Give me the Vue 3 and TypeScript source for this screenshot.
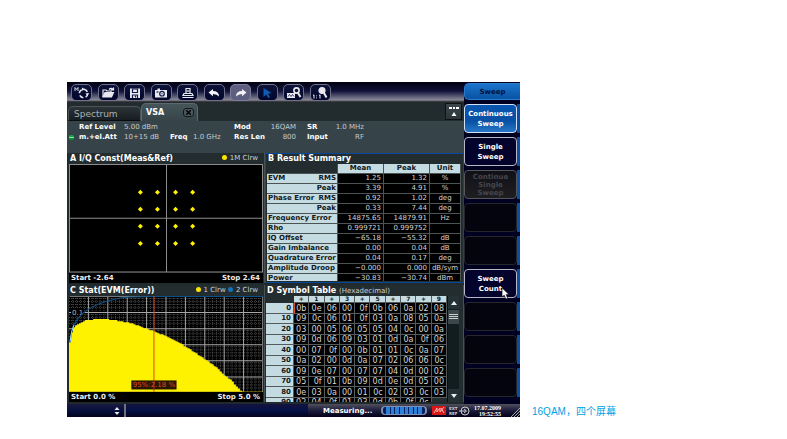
<script setup lang="ts">
type Tool = { name: string; active?: boolean }
const tools: Tool[] = [
  { name: 'Preset mode' }, { name: 'Open' }, { name: 'Save' }, { name: 'Screenshot' }, { name: 'Print' },
  { name: 'Undo' }, { name: 'Redo', active: true }, { name: 'Select' }, { name: 'Zoom window' }, { name: 'Zoom 1:1' },
]

type Key = { lines: string[]; state?: string }
const keys: Key[] = [
  { lines: ['Continuous', 'Sweep'], state: 'on' },
  { lines: ['Single', 'Sweep'] },
  { lines: ['Continue', 'Single', 'Sweep'], state: 'off' },
  { lines: [], state: 'empty' },
  { lines: [], state: 'empty' },
  { lines: ['Sweep', 'Count'] },
  { lines: [], state: 'empty' },
  { lines: [], state: 'empty' },
  { lines: [], state: 'empty' },
]

const results: [string, string, string, string, string][] = [
  ['EVM', 'RMS', '1.25', '1.32', '%'],
  ['', 'Peak', '3.39', '4.91', '%'],
  ['Phase Error', 'RMS', '0.92', '1.02', 'deg'],
  ['', 'Peak', '0.33', '7.44', 'deg'],
  ['Frequency Error', '', '14875.65', '14879.91', 'Hz'],
  ['Rho', '', '0.999721', '0.999752', ''],
  ['IQ Offset', '', '−65.18', '−55.32', 'dB'],
  ['Gain Imbalance', '', '0.00', '0.04', 'dB'],
  ['Quadrature Error', '', '0.04', '0.17', 'deg'],
  ['Amplitude Droop', '', '−0.000', '0.000', 'dB/sym'],
  ['Power', '', '−30.83', '−30.74', 'dBm'],
]

const symbolHead = ['+', '1', '+', '3', '+', '5', '+', '7', '+', '9']
const symbols = [
  '0b 0e 06 00 0f 0b 06 0a 02 08',
  '09 0c 06 01 0f 03 0a 08 05 0a',
  '03 00 05 06 05 05 04 0c 00 0a',
  '09 0d 06 09 03 01 0d 0a 0f 06',
  '00 07 0f 00 0b 01 01 0c 0a 07',
  '0a 02 00 0d 0a 07 02 06 06 0c',
  '09 0e 07 00 07 07 04 0d 00 02',
  '05 0f 01 0b 09 0d 0e 0d 05 00',
  '0e 03 0a 00 01 0c 02 03 0c 03',
  '02 04 0f 01 03 0d 0b 0f 0c',
].map((row) => row.split(' '))

const pointsX = [71, 88, 106, 123]
const pointsY = [28, 45, 62, 79]

// Histogram outline, sampled in plot units and filled as vertical bars.
const outline: [number, number][] = [
  [0, 46], [2, 36], [4, 31], [9, 27], [17, 24], [27, 23], [35, 23], [44, 24], [61, 27], [84, 35],
  [107, 45], [121, 54], [136, 64], [146, 71], [154, 79], [161, 84], [167, 91], [173, 96],
]
function outlineAt(x: number): number {
  for (let i = 1; i < outline.length; i++) {
    const [x1, y1] = outline[i]
    const [x0, y0] = outline[i - 1]
    if (x <= x1) return y0 + ((y1 - y0) * (x - x0)) / (x1 - x0)
  }
  return 96
}
let histogram = 'M0 96'
for (let x = 0; x < 173; x += 2) histogram += `V${Math.round(outlineAt(x))}H${Math.min(x + 2, 173)}`
histogram += 'V96Z'

const majorX = Array.from({ length: 9 }, (_, i) => (i + 1) * 19.3)
const minorX = Array.from({ length: 50 }, (_, i) => i * 3.86).filter((_, i) => i % 5 !== 0)
const majorY = [16, 32, 48, 64, 80]
const minorY = [0, 16, 32, 48, 64, 80].flatMap((y) => [2, 5, 8, 11].map((d) => y + d))
</script>

<template>
  <main class="page">
    <section class="analyzer">
      <div class="main">
        <nav class="toolbar" aria-label="Toolbar">
          <button v-for="(t, i) in tools" :key="t.name" class="tool" :class="{ active: t.active }" :aria-label="t.name">
            <svg viewBox="0 0 16 14" width="16" height="14" fill="none" stroke="#e8e8ee" stroke-width="1.2">
              <template v-if="i === 0">
                <path d="M1 5V1.500l1.500 2 1.500-2V5" stroke-width="0.900" />
                <circle cx="9.500" cy="7.500" r="4.200" stroke-dasharray="4.200 2.400" stroke-width="1.500" />
                <path d="M8 1.500l3 1.800-3 1.500zM15 7l-1.500 3-2-2.500z" fill="#e8e8ee" stroke="none" />
              </template>
              <template v-else-if="i === 1">
                <path d="M3 11V4h3l1 1h4v2" />
                <path d="M3 11l2-4.500h8.500L11.500 11z" fill="#e8e8ee" />
                <path d="M9 3.500q2-2 4 0M13.500 1.500v2.500H11" />
              </template>
              <template v-else-if="i === 2">
                <path d="M3 2.500h10v9.500H3z" fill="#e8e8ee" stroke="none" />
                <path d="M5.500 3h5v3.500h-5zM5.500 12V9h5v3" stroke="#11194a" />
                <path d="M8.500 9.500v2" stroke="#11194a" />
              </template>
              <template v-else-if="i === 3">
                <path d="M2 4h2.500V2.500H7V4h7v7.500H2z" fill="#e8e8ee" stroke="none" />
                <circle cx="9" cy="7.700" r="2.300" stroke="#11194a" />
                <path d="M3.500 6h2" stroke="#11194a" />
                <circle cx="9" cy="7.700" r="0.600" fill="#11194a" stroke="none" />
              </template>
              <template v-else-if="i === 4">
                <path d="M6 7V2.500h4V7M4 7.500h8l1 2H3zM2.500 11.500h11" />
                <path d="M6.500 5h3" />
              </template>
              <path v-else-if="i === 5" d="M2.500 6.500L7 3v2q6 0 6 5.500Q11 8 7 8v2.200z" fill="#f2f2f4" stroke="none" />
              <path v-else-if="i === 6" d="M13.500 6.500L9 3v2Q3 5 3 10.500 5 8 9 8v2.200z" fill="#f2f2f4" stroke="none" />
              <path v-else-if="i === 7" d="M4.500 2l8 5-3.500.7 2 3.300-1.800 1-1.900-3.400L4.500 11z" fill="#0e5cb4" stroke="none" />
              <template v-else-if="i === 8">
                <path d="M1 7h8v5H1z" fill="#e8e8ee" stroke="none" />
                <path d="M2 10.500l1.500-2 1.500 2 1.500-2 1.500 2" stroke="#11194a" stroke-width="0.800" />
                <circle cx="10.500" cy="4.500" r="2.600" stroke-width="1.600" />
                <path d="M12 7l2.500 4" stroke-width="2" />
              </template>
              <template v-else>
                <circle cx="10" cy="4.500" r="3" fill="#e8e8ee" />
                <path d="M12 7l2.500 4.500" stroke-width="2" />
                <path d="M1 9.500l1-.7V12.500M7 9.500l1-.7V12.500M4.500 9.500v.8M4.500 11.500v.8" stroke-width="1" />
              </template>
            </svg>
          </button>
        </nav>

        <div class="tabs">
          <button class="tab">Spectrum</button>
          <div class="tab current">
            <button class="tabname">VSA</button>
            <button class="close" aria-label="Close VSA">
              <svg viewBox="0 0 5 5" width="5" height="5"><path d="M0 0l5 5M5 0L0 5" stroke="#020405" stroke-width="1.500" /></svg>
            </button>
          </div>
          <button class="drop" aria-label="Show windows">
            <svg viewBox="0 0 14 14" width="14" height="14" fill="#fff">
              <path d="M2 2h3v2H2zM6 2h2v2H6zM9 2h3v2H9zM7 7l2.500 4h-5z" />
            </svg>
          </button>
        </div>

        <div class="info">
          <b class="c1">Ref Level</b><span>5.00 dBm</span><i></i><i></i>
          <b>Mod</b><span class="r">16QAM</span><b class="c7">SR</b><span class="r">1.0 MHz</span>
          <b class="c1 led">m.+el.Att</b><span>10+15 dB</span><b>Freq</b><span>1.0 GHz</span>
          <b>Res Len</b><span class="r">800</span><b class="c7">Input</b><span class="r">RF</span>
        </div>

        <div class="windows">
          <section class="panel">
            <h2><span>A I/Q Const(Meas&amp;Ref)</span><small><em class="dot"></em>1M Clrw</small></h2>
            <svg class="plot" viewBox="0 0 193 108">
              <rect width="193" height="108" fill="#000" />
              <path d="M.5.5h192v107H.5zM97 0v108M0 54h193" fill="none" stroke="#8c8c8c" />
              <template v-for="y in pointsY" :key="y">
                <path v-for="x in pointsX" :key="x" :d="`M${x} ${y}m-2.500 0l2.500-2.500 2.500 2.500-2.500 2.500z`" fill="#fff200" />
              </template>
            </svg>
            <footer><span>Start -2.64</span><span>Stop 2.64</span></footer>
          </section>

          <section class="panel focus">
            <h2><span>B Result Summary</span></h2>
            <div class="clip">
              <table class="results">
                <thead>
                  <tr><td></td><th>Mean</th><th>Peak</th><th>Unit</th></tr>
                </thead>
                <tbody>
                  <tr v-for="(r, i) in results" :key="i">
                    <th><div><span>{{ r[0] }}</span><span>{{ r[1] }}</span></div></th>
                    <td>{{ r[2] }}</td><td>{{ r[3] }}</td><td class="unit">{{ r[4] }}</td>
                  </tr>
                </tbody>
              </table>
            </div>
          </section>

          <section class="panel">
            <h2><span>C Stat(EVM(Error))</span><small><em class="dot"></em>1 Clrw <em class="dot blue"></em>2 Clrw</small></h2>
            <svg class="plot" viewBox="0 0 193 96">
              <rect width="193" height="96" fill="#000" />
              <g stroke="#666" stroke-dasharray="1 1" stroke-width="0.700">
                <path v-for="x in minorX" :key="x" :d="`M${x} 0V96`" />
                <path v-for="y in minorY" :key="y" :d="`M0 ${y + 0.5}H193`" />
              </g>
              <g stroke="#a8a8a8">
                <path v-for="x in majorX" :key="x" :d="`M${x} 0V96`" />
                <path v-for="y in majorY" :key="y" :d="`M0 ${y + 0.5}H193`" />
              </g>
              <path d="M.5.5h192v95" fill="none" stroke="#777" />
              <rect x="2" y="12" width="13" height="8" fill="#000" />
              <text x="3" y="19" class="axis">0.1</text>
              <path :d="histogram" fill="#fff200" />
              <path d="M0 95.500H193" stroke="#a89c10" />
              <path d="M1 46Q3 30 7 25Q18 8 51 2Q64 .5 84 .5H193" fill="none" stroke="#0c5288" />
              <path d="M1 46Q2 35 5 29" fill="none" stroke="#a8e0e8" />
              <path d="M84.500 0V96" stroke="#e24a14" />
              <rect x="62" y="84" width="45" height="9" fill="#2a1606" />
              <path d="M84.500 84V93" stroke="#a83a14" />
              <text x="84.500" y="91" text-anchor="middle" class="marker">95%:2.18 %</text>
            </svg>
            <footer><span>Start 0.0 %</span><span>Stop 5.0 %</span></footer>
          </section>

          <section class="panel">
            <h2><span>D Symbol Table <small>(Hexadecimal)</small></span></h2>
            <div class="symbolbox">
              <div class="clip">
                <table class="symbols">
                  <thead>
                    <tr><td></td><th v-for="(h, i) in symbolHead" :key="i">{{ h }}</th></tr>
                  </thead>
                  <tbody>
                    <tr v-for="(row, i) in symbols" :key="i">
                      <th>{{ i * 10 }}</th>
                      <td v-for="(s, j) in row" :key="j" :class="{ cursor: i === 0 && j === 0 }">{{ s }}</td>
                    </tr>
                  </tbody>
                </table>
              </div>
              <div class="scroll">
                <button aria-label="Scroll up"><svg viewBox="0 0 6 4" width="6" height="4"><path d="M3 0l3 4H0z" fill="#eee" /></svg></button>
                <div class="thumb"></div>
                <button class="down" aria-label="Scroll down"><svg viewBox="0 0 6 4" width="6" height="4"><path d="M3 4l3-4H0z" fill="#eee" /></svg></button>
              </div>
            </div>
          </section>
        </div>
      </div>

      <aside class="side">
        <h1>Sweep</h1>
        <div v-for="(k, i) in keys" :key="i" class="keyrow">
          <button class="key" :class="k.state" :disabled="k.state === 'off' || k.state === 'empty'" :aria-label="k.lines.join(' ') || 'Unassigned'">
            <span v-for="l in k.lines" :key="l">{{ l }}</span>
          </button>
          <svg v-if="i === 5" class="pointer" viewBox="0 0 9 13" width="9" height="13">
            <path d="M1 .8v9.400l2.200-2 1.600 3.900 1.900-.8L5.200 7.600H8z" fill="#fff" stroke="#111" stroke-width="0.700" />
          </svg>
        </div>
      </aside>

      <div class="status">
        <button class="spin" aria-label="Select channel">
          <svg viewBox="0 0 6 8" width="6" height="8"><path d="M3 0l2.500 3h-5zM3 8l2.500-3h-5z" fill="#e8e8f0" /></svg>
        </button>
        <div class="blank"></div>
        <div class="state">
          <b class="measuring">Measuring...</b>
          <div class="progress"><i v-for="n in 8" :key="n"></i></div>
          <svg viewBox="0 0 14 9" width="14" height="9">
            <rect width="14" height="9" fill="#d81818" />
            <path d="M2 7l3-5v4l3-4v4l4-5M9 2l3 5" fill="none" stroke="#f6b8b0" />
          </svg>
          <span class="ext"><b>EXT</b><b>REF</b></span>
          <svg viewBox="0 0 11 10" width="11" height="10" fill="none" stroke="#ccc">
            <circle cx="6" cy="5" r="4" /><path d="M0 5h7M5 3l2.500 2L5 7" />
          </svg>
          <time><b>17.07.2009</b><b>19:52:55</b></time>
          <svg class="grip" viewBox="0 0 9 9" width="9" height="9" stroke="#aaa"><path d="M0 9l9-9M3 9l6-6M6 9l3-3" /></svg>
        </div>
      </div>
    </section>
    <p class="caption">16QAM，四个屏幕</p>
  </main>
</template>

<style>
body { background: #fff; }
</style>

<style scoped>
* { box-sizing: border-box; }
.page { display: grid; grid-template-columns: 453fr 255fr; column-gap: 12px; padding: 82px 0 20px 67px; align-items: end; }
.caption { margin: 0; font: 10px/10px "Liberation Sans", "Noto Sans CJK SC", sans-serif; color: #009fe3; }
.analyzer { display: grid; grid-template-columns: minmax(0, 1fr) 56px; background: #000018; color: #fff; font: 7px/10px "DejaVu Sans", sans-serif; }
button { margin: 0; padding: 0; border: 0; background: none; color: inherit; font: inherit; }
svg { display: block; }
h1, h2 { margin: 0; }

.main { background: #303d42; min-width: 0; }
.toolbar { display: flex; justify-content: space-between; height: 20px; padding: 2px 133px 0 4px; background: linear-gradient(#00000f, #10103a 45%, #8a8a98 90%, #222 100%); }
.tool { display: flex; align-items: center; justify-content: center; width: 21px; height: 17px; border: 1px solid #70708a; border-radius: 5px; background: linear-gradient(#0c1238, #02062c); }
.tool.active { background: #5c5f80; border-color: #7c7f9a; }

.tabs { display: flex; align-items: flex-end; height: 19px; padding-left: 1px; background: #222b2e; font-size: 9px; line-height: 12px; }
.tab { display: flex; align-items: center; height: 15px; width: 73px; padding: 0 5px; border: 1px solid #4c5658; border-bottom-color: #090d0f; border-radius: 5px 5px 0 0; background: linear-gradient(#2c3437, #171d20); color: #aab0b2; }
.tab.current { justify-content: space-between; width: 57px; height: 18px; padding: 0 3px 0 4px; background: linear-gradient(#46555a, #36444a); border-color: #5d696c; border-bottom: 0; color: #fff; }
.tabname { font-weight: bold; font-size: 8px; }
.close { display: flex; align-items: center; justify-content: center; width: 11px; height: 9px; border: 1px solid #11181b; border-radius: 3px; background: #4a585d; }
.drop { display: flex; align-items: center; justify-content: center; width: 17px; height: 17px; margin: 0 2px 1px auto; border: 1px solid #111; background: linear-gradient(#3d474b, #2b3437); }

.info { display: grid; grid-template-columns: 57px 46px 23px 41px 29px 33px 38px 30px; height: 32px; padding-top: 1px; background: #36444a; color: #c4cacc; grid-auto-rows: 10px; white-space: nowrap; }
.info b { color: #fff; }
.info .c1 { padding-left: 12px; }
.info .c7 { padding-left: 11px; }
.info .led { position: relative; }
.led::before { content: ""; position: absolute; left: 2px; top: 3px; width: 5px; height: 5px; border-radius: 2px; background: linear-gradient(#12a84a 2px, #8ae6a4 2px 3px, #089038 3px); }
.r { text-align: right; }

.windows { display: grid; grid-template-columns: 197fr 199fr; gap: 2px 0; padding: 0 0 2px 1px; background: #20292c; }
.panel { display: flex; flex-direction: column; min-width: 0; padding: 0 1px; border: 1px solid #485254; border-width: 0 1px 0 0; background: #232d30; }
.panel.focus { border: 1px solid #07479a; padding: 0 2px 1px 1px; }
.panel h2 { display: flex; justify-content: space-between; height: 11px; padding: 0 5px 0 1px; font-size: 8px; font-weight: bold; line-height: 11px; white-space: nowrap; }
.panel.focus h2 { height: 10px; line-height: 9px; }
.panel small { font-weight: normal; font-size: 7px; color: #cdd2d4; }
.dot { display: inline-block; width: 5px; height: 5px; margin-right: 3px; border-radius: 3px; background: #ffe600; }
.dot.blue { background: #1672b8; }
.plot { width: 100%; height: auto; }
.panel footer { display: flex; justify-content: space-between; padding: 0 3px 0 2px; background: #000; font-weight: bold; color: #eee; }
.axis { font: 7px "DejaVu Sans", sans-serif; fill: #b4b4b4; }
.marker { font: 7px "DejaVu Sans", sans-serif; fill: #e04a18; }

.clip { flex: 1; min-width: 0; overflow: hidden; }
table { width: 100%; border-collapse: separate; border-spacing: 0; table-layout: fixed; }
th, td { padding: 0; white-space: nowrap; }
th { background: #c5dbe2; color: #101820; }
tbody td { background: #000; color: #d4d4d4; }
.focus .clip { flex: none; height: 117px; }
.results tr { height: 10px; }
.results th, .results td { height: 10px; line-height: 9px; border-right: 1px solid #4b5355; border-bottom: 1px solid #4b5355; }
.results th:first-child, .results thead td { width: 71px; }
.results thead th { width: 46px; }
.results thead th:last-child { width: auto; }
.results tbody td { text-align: right; padding-right: 2px; }
.results tbody .unit { text-align: center; padding: 0; }
.results th div { display: flex; justify-content: space-between; padding: 0 1px; }

.symbolbox { display: flex; flex: none; height: 106px; padding-right: 3px; }
.symbols tr { height: 11px; }
.symbols tr:nth-child(even) { height: 10px; }
.symbols th, .symbols td { line-height: 9px; border-right: 1px solid #555b5d; border-bottom: 1px solid #555b5d; }
.symbols thead tr { height: 7px; }
.symbols thead th, .symbols thead td { line-height: 6px; font-size: 6px; }
.symbols thead td { width: 28px; border: 0; }
.symbols tbody th { text-align: right; padding-right: 2px; }
.symbols tbody td { text-align: right; padding-right: 2px; font-size: 8px; }
.symbols .cursor { border-left: 1px solid #e0501c; }
.scroll { display: flex; flex-direction: column; width: 12px; background: #121d20; border-left: 1px solid #0a1012; }
.scroll button { display: flex; align-items: center; justify-content: center; height: 13px; background: #243236; }
.scroll .down { margin-top: auto; }
.thumb { height: 14px; margin-top: 1px; border: solid #3a484c; border-width: 4px 1px; background: linear-gradient(#ccc 1px, #3a484c 1px 2px, #ccc 2px 3px, #3a484c 3px 4px, #ccc 4px 5px, #3a484c 5px); }

.side { display: flex; flex-direction: column; gap: 4px; padding-top: 1px; background: #000020; font-weight: bold; }
.side h1 { height: 17px; border: 1px solid #2c7cd0; border-right: 0; border-radius: 5px 0 0 5px; background: linear-gradient(#1a74cc, #0852a2); color: #001040; text-align: center; font-size: 7px; line-height: 16px; }
.keyrow { position: relative; height: 29px; padding-right: 3px; background: linear-gradient(90deg, #000020 0 53px, #0b4fa4 53px); }
.key { display: flex; flex-direction: column; align-items: center; justify-content: center; width: 100%; height: 29px; border: 1px solid #b8b8c4; border-radius: 4px; background: #03032c; color: #fff; line-height: 10px; font-weight: bold; }
.key.on { background: linear-gradient(#0856b0, #0850a4 60%, #2878c8); border-color: #d0e2f6; }
.key.off { background: linear-gradient(#101018, #1e1e22); border-color: #55555a; color: #46464c; line-height: 8px; }
.key.empty { background: #04040f; border-color: #26262c; }
.pointer { position: absolute; right: 10px; bottom: -2px; }

.status { grid-column: 1 / -1; display: grid; grid-template-columns: 59px 182fr 212fr; height: 13px; background: #04042a; }
.spin { display: flex; align-items: center; justify-content: flex-end; padding-right: 4px; border-right: 2px solid #70707c; background: linear-gradient(#1a1a40, #06103c 50%, #02021c); }
.blank { background: linear-gradient(#141440, #041044 50%, #02021c); }
.state { display: flex; align-items: center; padding-left: 15px; background: linear-gradient(#50505c, #202040 45%, #000018); white-space: nowrap; }
.measuring { width: 58px; }
.progress { display: flex; gap: 1px; width: 46px; height: 9px; padding: 0 3px; margin-right: 5px; border: 1px solid #8090b0; border-width: 1px 2px; border-radius: 4px; background: #04205c; }
.progress i { flex: 1; background: #2c80d8; }
.ext { display: flex; flex-direction: column; width: 10px; margin-left: 3px; font-size: 4px; line-height: 5px; color: #ccc; }
time { display: flex; flex-direction: column; align-items: flex-end; margin-left: 4px; font: 6px/6px "Liberation Serif", serif; color: #fff; }
.grip { margin: 4px 0 0 auto; }
</style>
